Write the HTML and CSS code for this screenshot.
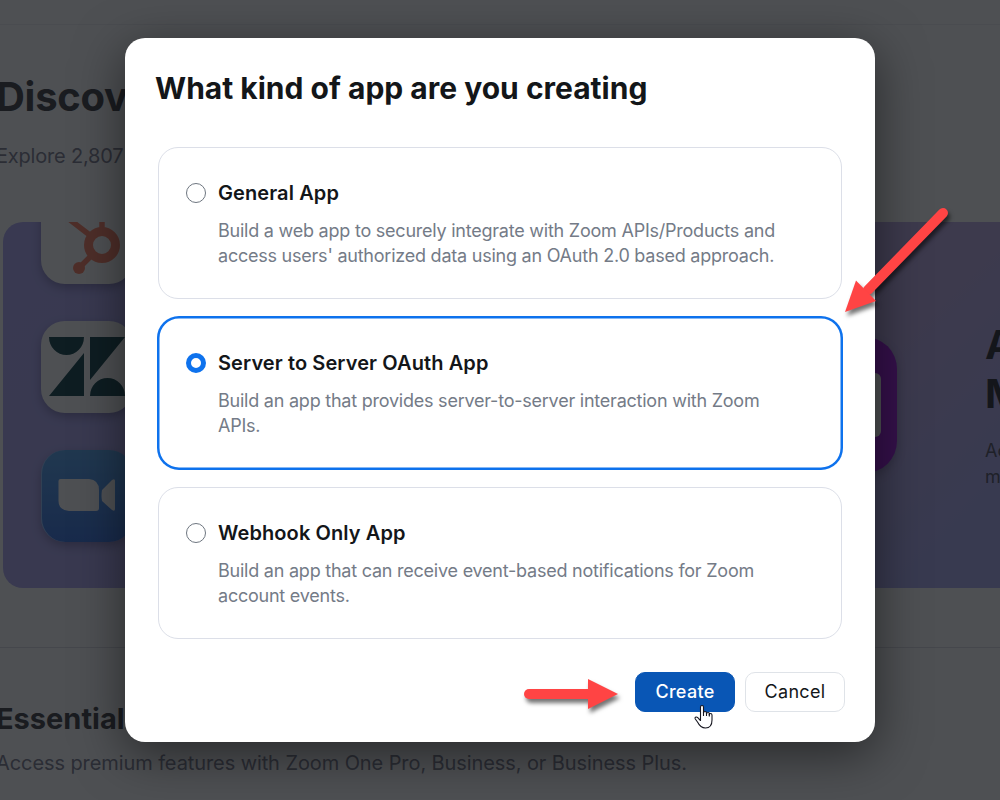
FILE: index.html
```
<!DOCTYPE html>
<html lang="en">
<head>
    <meta charset="UTF-8">
    <meta name="viewport" content="width=device-width, initial-scale=1.0">
    <title>App Marketplace</title>
    <link rel="stylesheet" href="styles.css">
</head>
<body>
    <!-- Marketplace page -->
    <div class="page">
        <div class="topbar"></div>
        <div class="discover">
            <h1>Discover</h1>
            <p>Explore 2,807</p>
        </div>
        <div class="banner">
            <div class="app-icons">
                <div class="app-icon">
                    <svg width="92" height="92" viewBox="0 0 92 92">
                        <g fill="none" stroke="#ff7a59">
                            <circle cx="61" cy="53" r="13.5" stroke-width="9"/>
                            <path d="M61 40V22M50 44L24 24M51 63L39 75" stroke-width="5.5"/>
                        </g>
                        <circle cx="38" cy="76" r="6" fill="#ff7a59"/>
                    </svg>
                </div>
                <div class="app-icon">
                    <svg width="92" height="92" viewBox="0 0 92 92">
                        <path fill="#03363d" d="M8 16H43A17.5 18 0 0 1 8 16ZM43 32V75H8ZM49 16H84L49 59ZM49 75A17.5 18 0 0 1 84 75Z"/>
                    </svg>
                </div>
                <div class="app-icon zoom">
                    <svg width="92" height="92" viewBox="0 0 92 92">
                        <path fill="#fff" d="M18.500 29H47Q57 30 57 40V58Q57 61 54 61H27Q16.500 60 16.500 51V31Q16.500 29 18.500 29ZM60 40L70 30Q73 28 73 31V59Q73 62 70 60L60 51Q59 46 60 40Z"/>
                    </svg>
                </div>
            </div>
            <div class="feature-icon"><div class="feature-screen"></div></div>
            <div class="banner-text">
                <h2>A<br>M</h2>
                <p>Ac<br>m</p>
            </div>
        </div>
        <div class="essentials">
            <h2>Essentials</h2>
            <p>Access premium features with Zoom One Pro, Business, or Business Plus.</p>
        </div>
    </div>

    <!-- Create app dialog -->
    <div class="overlay">
        <form class="modal">
            <h2 class="modal-title">What kind of app are you creating</h2>
            <div class="options">
                <label class="option">
                    <input type="radio" name="app-type" class="radio">
                    <div class="option-body">
                        <h3>General App</h3>
                        <p>Build a web app to securely integrate with Zoom APIs/Products and<br>access users' authorized data using an OAuth 2.0 based approach.</p>
                    </div>
                </label>
                <label class="option selected">
                    <input type="radio" name="app-type" class="radio" checked>
                    <div class="option-body">
                        <h3>Server to Server OAuth App</h3>
                        <p>Build an app that provides server-to-server interaction with Zoom<br>APIs.</p>
                    </div>
                </label>
                <label class="option">
                    <input type="radio" name="app-type" class="radio">
                    <div class="option-body">
                        <h3>Webhook Only App</h3>
                        <p>Build an app that can receive event-based notifications for Zoom<br>account events.</p>
                    </div>
                </label>
            </div>
            <div class="actions">
                <button type="button" class="button primary">Create</button>
                <button type="button" class="button">Cancel</button>
            </div>
        </form>
    </div>

    <!-- Arrows -->
    <svg class="arrow arrow-option" width="130" height="130" viewBox="830 195 130 130">
        <path d="M943 213L868 290" stroke="#ff4444" stroke-width="10" stroke-linecap="round"/>
        <path d="M845 312L856 280.500L876 301Z" fill="#ff4444"/>
    </svg>
    <svg class="arrow arrow-create" width="110" height="50" viewBox="515 670 110 50">
        <path d="M529 694H592" stroke="#ff4444" stroke-width="10" stroke-linecap="round"/>
        <path d="M588 679L618 694L588 709Z" fill="#ff4444"/>
    </svg>
    <svg class="cursor" width="20" height="26" viewBox="0 0 20 26">
        <path d="M6.500 14V3Q6.500 1.500 8 1.500T9.500 3V9Q9.500 7.500 11 7.500T12.500 9V10Q12.500 8.500 14 8.500T15.300 10V11Q15.300 9.500 16.600 9.500T18 11V16C18 21 16 24 11.500 24C7 24 5 21 3.500 18L1.300 15Q.500 13.500 2 13Q3.500 12.700 5 15L6.500 16.500Z" fill="#fff" stroke="#15151f" stroke-width="1.100" stroke-linejoin="round"/>
        <path d="M9.500 8V12M12.500 9V12M15.300 10V12.500" stroke="#15151f" stroke-width="1.100"/>
    </svg>
</body>
</html>
```
FILE: styles.css
```
* {
    box-sizing: border-box;
}
body {
    margin: 0;
    height: 800px;
    overflow: hidden;
    position: relative;
    background: #fff;
    font-family: 'Inter', 'Liberation Sans', sans-serif;
    color: #131619;
}
h1, h2, h3, p {
    margin: 0;
}
.page {
    height: 800px;
    margin-left: -4px;
    overflow: hidden;
}
.topbar {
    height: 25px;
    border-bottom: 1px solid #eeeef4;
}
.discover {
    height: 197px;
    padding-top: 47px;
}
.discover h1 {
    font-size: 40px;
    line-height: 50px;
    letter-spacing: -0.3px;
    color: #303034;
}
.discover p {
    margin-top: 22px;
    font-size: 20px;
    line-height: 24px;
    letter-spacing: -0.2px;
    color: #747487;
}
.banner {
    display: flex;
    height: 366px;
    margin-left: 7px;
    border-radius: 20px 0 0 20px;
    overflow: hidden;
    background: linear-gradient(135deg, #aaa4f6 0%, #aaa4f2 30%, #baa6e8 60%, #baa6e8 75%, #a6a6f4 95%);
}
.app-icons {
    display: flex;
    flex-direction: column;
    gap: 37px;
    width: 92px;
    margin-left: 38px;
    margin-top: -30px;
    flex-shrink: 0;
}
.app-icon {
    height: 92px;
    flex-shrink: 0;
    border-radius: 24px;
    background: #fff;
    box-shadow: 0 4px 10px rgba(30, 20, 60, 0.35);
}
.zoom {
    background: linear-gradient(#4a9ff0, #2a6ae0);
    border-left: 1px solid #8ac0ff;
}
.feature-icon {
    display: flex;
    justify-content: flex-end;
    align-items: center;
    width: 136px;
    height: 136px;
    padding-right: 16px;
    margin: 115px 0 0 628px;
    border-radius: 32px;
    flex-shrink: 0;
    background: #9a00e0;
    box-shadow: 0 4px 10px rgba(30, 20, 60, 0.3);
}
.feature-screen {
    width: 104px;
    height: 64px;
    border-radius: 6px;
    background: #fff;
}
.banner-text {
    margin: 98px 0 0 88px;
}
.banner-text h2 {
    font-size: 40px;
    line-height: 49px;
    color: #1a1a22;
}
.banner-text p {
    margin-top: 20px;
    font-size: 18px;
    line-height: 26px;
    color: #444455;
}
.essentials {
    margin-top: 59px;
    padding-top: 54px;
    border-top: 1px solid #dcdce2;
}
.essentials h2 {
    font-size: 29px;
    line-height: 34px;
    color: #303034;
}
.essentials p {
    margin-top: 14px;
    font-size: 20px;
    line-height: 26px;
    letter-spacing: -0.09px;
    color: #747487;
}
.overlay {
    position: absolute;
    inset: 0;
    padding-top: 38px;
    background: rgba(19, 22, 25, 0.75);
}
.modal {
    width: 750px;
    height: 704px;
    margin: 0 auto;
    padding: 32px 30px 0;
    border-radius: 20px;
    background: #fff;
    box-shadow: 0 12px 50px rgba(0, 0, 0, 0.5);
}
.modal-title {
    font-size: 30px;
    line-height: 36px;
    font-weight: 650;
}
.options {
    display: flex;
    flex-direction: column;
    gap: 18px;
    margin: 41px 3px 0;
}
.option {
    display: flex;
    gap: 12px;
    height: 152px;
    padding: 32px 27px 0;
    border: 1px solid #dcdfe8;
    border-radius: 20px;
}
.selected {
    height: 154px;
    margin: -1px;
    padding: 34px 29px 0;
    border: 0;
    border-radius: 22px;
    box-shadow: inset 0 0 0 2.500px #0e72ed;
}
.radio {
    appearance: none;
    width: 20px;
    height: 20px;
    margin: 3px 0 0;
    flex-shrink: 0;
    border: 1px solid #6e7680;
    border-radius: 50%;
}
.radio:checked {
    border: 5px solid #0e72ed;
}
.option h3 {
    font-size: 20px;
    line-height: 26px;
    font-weight: 600;
    letter-spacing: 0.1px;
}
.option p {
    margin-top: 12px;
    font-size: 18px;
    line-height: 25px;
    letter-spacing: -0.23px;
    color: #747b87;
    white-space: nowrap;
}
.actions {
    display: flex;
    justify-content: flex-end;
    gap: 10px;
    margin-top: 33px;
}
.button {
    width: 100px;
    height: 40px;
    padding: 0 0 2px;
    border: 1px solid #dfe3e8;
    border-radius: 10px;
    background: #fff;
    color: #131619;
    font-family: inherit;
    font-size: 18px;
    letter-spacing: 0.3px;
    cursor: pointer;
}
.primary {
    border-color: #0956b5;
    background: #0956b5;
    color: #fff;
    font-weight: 500;
}
.arrow {
    position: absolute;
    filter: drop-shadow(2px 4px 2px rgba(0, 0, 0, 0.55));
}
.arrow-option {
    left: 830px;
    top: 195px;
}
.arrow-create {
    left: 515px;
    top: 670px;
}
.cursor {
    position: absolute;
    left: 694px;
    top: 704px;
}
```
